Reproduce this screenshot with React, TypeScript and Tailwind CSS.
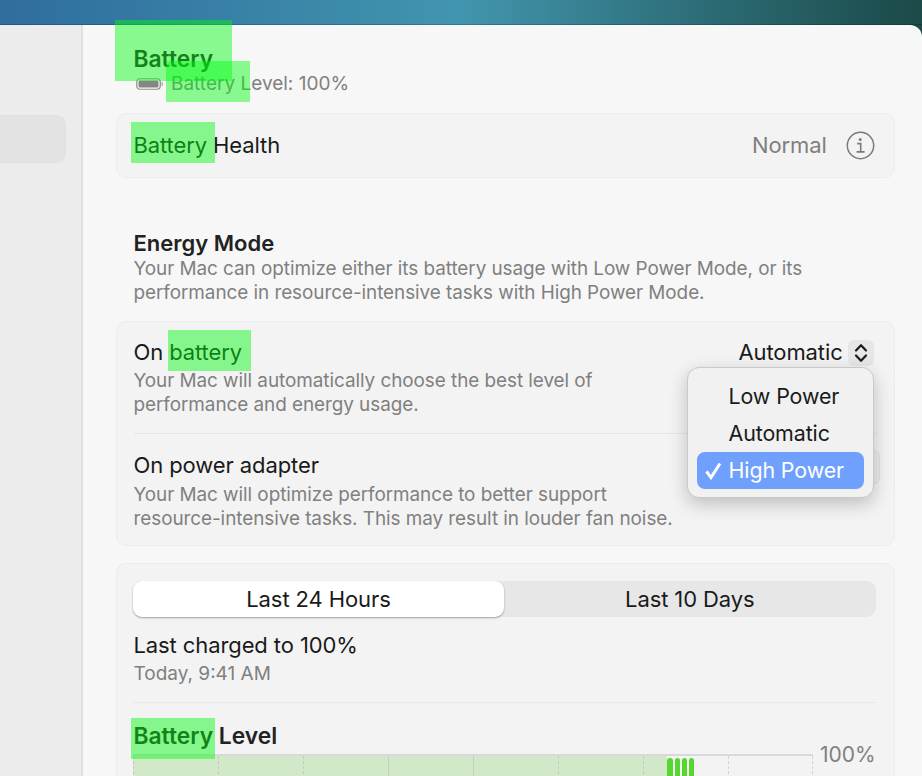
const highlights = [
  'left-[115px] top-[20px] w-[117px] h-[61px]',
  'left-[166px] top-[61px] w-[84px] h-[41px]',
  'left-[131px] top-[122px] w-[84px] h-[41px]',
  'left-[168px] top-[330px] w-[83px] h-[41px]',
  'left-[131px] top-[718px] w-[84px] h-[41px]',
]

const gridLines = [
  { x: 'border-dashed border-[#c5c9c3]' },
  { x: 'border-dashed border-[#c5c9c3]' },
  { x: 'border-dashed border-[#c5c9c3]' },
  { x: 'border-solid border-[#c2d0bd]' },
  { x: 'border-solid border-[#c2d0bd]' },
  { x: 'border-dashed border-[#c5c9c3]' },
  { x: 'border-dashed border-[#c5c9c3]' },
  { x: 'border-dashed border-[#d8d0d0]' },
]

function BatteryIcon() {
  return (
    <svg width="28" height="14" viewBox="0 0 28 14" className="shrink-0">
      <rect x="0.75" y="1.75" width="23.5" height="10.5" rx="3" fill="none" stroke="#8f8f8f" strokeWidth="1.2" />
      <rect x="2.5" y="3.5" width="20" height="7" rx="1.5" fill="#858585" />
      <rect x="25.5" y="5.2" width="1.3" height="3.6" rx="0.6" fill="#9a9a9a" />
    </svg>
  )
}

function InfoIcon() {
  return (
    <svg width="29" height="29" viewBox="0 0 29 29" fill="none" stroke="#7a7a7a" className="shrink-0">
      <circle cx="14.5" cy="14.5" r="13.2" strokeWidth="1.5" />
      <circle cx="14.2" cy="8.6" r="1.5" fill="#7a7a7a" stroke="none" />
      <path d="M11.2 12.6h3.5v8.2M10.6 20.9h8" strokeWidth="1.6" />
    </svg>
  )
}

function Stepper() {
  return (
    <div className="w-[26px] h-[26px] rounded-md bg-[#e6e6e6] flex items-center justify-center">
      <svg width="14" height="20" viewBox="0 0 14 20" fill="none" stroke="#1a1a1a" strokeWidth="2.2" strokeLinecap="round" strokeLinejoin="round">
        <path d="M2 7.5L7 2.2l5 5.3M2 12.5l5 5.3 5-5.3" />
      </svg>
    </div>
  )
}

export default function App() {
  return (
    <div className="relative w-[922px] h-[776px] overflow-hidden bg-[#1b4a48] font-['Inter','Liberation_Sans',sans-serif] text-[#1a1a1a]">
      {/* Wallpaper */}
      <div className="h-[25px] bg-gradient-to-r from-[#2f6d9e] via-[#4295ae] to-[#1b4a48] border-b border-black/20" />

      <div className="flex h-[751px] bg-[#f7f7f7] rounded-tr-xl overflow-hidden">
        {/* Sidebar */}
        <aside className="w-[83px] shrink-0 bg-[#ececec] border-r-2 border-[#e0e0e0] pt-[90px]">
          <div className="w-[66px] h-[48px] bg-[#e3e3e3] rounded-r-[10px] border border-l-0 border-[#e0e0e0]" />
        </aside>

        {/* Content */}
        <main className="flex-1 pl-[33px] pr-[28px]">
          <div className="pl-[17.5px] pt-[20px]">
            <h1 className="text-[22.8px] leading-[28px] font-semibold text-[#222]">Battery</h1>
            <div className="flex items-center gap-[7px] h-[24px] pl-[2.5px] -mt-[1px] text-[19px] text-[#808080]">
              <BatteryIcon />
              <span>Battery Level: 100%</span>
            </div>
          </div>

          <section className="mt-[17px] h-[65px] bg-[#f3f3f3] border border-[#ececec] rounded-[10px] pl-[16.5px] pr-[19px] flex items-center justify-between">
            <span className="text-[22px] tracking-[-0.1px]">Battery Health</span>
            <div className="flex items-center gap-[19px] text-[#7f7f7f]">
              <span className="text-[22px] tracking-[-0.1px]">Normal</span>
              <InfoIcon />
            </div>
          </section>

          <div className="pl-[17.5px] mt-[51px]">
            <h2 className="text-[22px] leading-[28px] font-semibold text-[#222]">Energy Mode</h2>
            <p className="text-[18.9px] leading-[24px] text-[#808080] tracking-[-0.05px]">
              Your Mac can optimize either its battery usage with Low Power Mode, or its
              <br />
              performance in resource-intensive tasks with High Power Mode.
            </p>
          </div>

          <section className="mt-[16px] h-[225px] bg-[#f3f3f3] border border-[#ececec] rounded-[10px] pl-[16.5px] pr-[17px]">
            <div className="h-[112px] pt-[16px] border-b border-[#e6e6e6] relative">
              <div className="text-[22px] leading-[28px] tracking-[-0.1px]">On battery</div>
              <p className="text-[18.9px] leading-[24px] text-[#808080] tracking-[-0.05px] mt-[3px]">
                Your Mac will automatically choose the best level of
                <br />
                performance and energy usage.
              </p>
              <div className="absolute right-[3px] top-[14px] flex items-center gap-[5px]">
                <span className="text-[22px] tracking-[-0.1px]">Automatic</span>
                <Stepper />
              </div>
            </div>
            <div className="pt-[17px] relative">
              <div className="text-[22px] leading-[28px] tracking-[-0.1px]">On power adapter</div>
              <p className="text-[18.9px] leading-[24px] text-[#808080] tracking-[-0.05px] mt-[4px]">
                Your Mac will optimize performance to better support
                <br />
                resource-intensive tasks. This may result in louder fan noise.
              </p>
              <div className="absolute -right-[3px] top-[16px] w-[26px] h-[34px] rounded-md bg-[#ececec] border border-[#e3e3e3]" />
            </div>
          </section>

          <section className="mt-[17px] h-[260px] bg-[#f3f3f3] border border-[#ececec] rounded-[10px] pl-[16px] pr-[18px] pt-[17px]">
            <div className="flex h-[36px] bg-[#e7e7e7] rounded-[9px]">
              <div className="w-[371px] bg-white rounded-[9px] shadow-[0_1px_2px_rgba(0,0,0,0.35)] flex items-center justify-center text-[22px] tracking-[-0.1px]">
                Last 24 Hours
              </div>
              <div className="flex-1 flex items-center justify-center text-[22px] tracking-[-0.1px]">Last 10 Days</div>
            </div>
            <div className="mt-[14px] pl-[0.5px] text-[22px] leading-[28px] tracking-[-0.1px]">Last charged to 100%</div>
            <div className="text-[19px] leading-[25px] pl-[0.5px] text-[#808080] mt-[2px]">Today, 9:41 AM</div>
            <div className="mt-[16px] border-t border-[#e8e8e8]" />
            <div className="mt-[19px] pl-[0.5px] text-[22.8px] leading-[28px] font-semibold text-[#222]">Battery Level</div>
            <div className="flex mt-[4px] items-start">
              <div className="relative w-[680px] h-[60px] border-t-2 border-[#d9d9d9] flex shrink-0">
                <div className="absolute left-0 top-0 bottom-0 w-[534px] bg-[#d2e9c9]" />
                {gridLines.map((line, i) => (
                  <div key={i} className={`relative w-[85px] h-full border-l ${line.x}`} />
                ))}
                <div className="absolute right-0 top-0 bottom-0 border-r border-dashed border-[#d8d0d0]" />
                <div className="absolute left-[534px] top-[2px] flex gap-[2px]">
                  <div className="w-[6px] h-[60px] rounded-t-[3px] bg-[#56d62f]" />
                  <div className="w-[5px] h-[60px] rounded-t-[3px] bg-[#56d62f]" />
                  <div className="w-[5px] h-[60px] rounded-t-[3px] bg-[#56d62f]" />
                  <div className="w-[5px] h-[60px] rounded-t-[3px] bg-[#56d62f]" />
                </div>
              </div>
              <span className="ml-[7px] -mt-[11px] text-[21px] leading-[24px] text-[#808080]">100%</span>
            </div>
          </section>
        </main>
      </div>

      {/* Open menu */}
      <div className="absolute left-[687px] top-[367px] w-[187px] h-[131px] rounded-[12px] bg-[#f1f1f1] border border-[#c9c9c9] shadow-[0_6px_18px_rgba(0,0,0,0.22)] px-[9px] pt-[10px] text-[21.4px] tracking-[-0.1px]">
        <div className="h-[37px] pl-[31.5px] flex items-center">Low Power</div>
        <div className="h-[37px] pl-[31.5px] flex items-center">Automatic</div>
        <div className="h-[37px] pl-[7px] flex items-center gap-[5.5px] rounded-[8px] bg-[#70a0fd] text-white">
          <svg width="19" height="19" viewBox="0 0 19 19" fill="none" stroke="white" strokeWidth="3" className="shrink-0">
            <path d="M2.5 10.5l4.5 6L16 2.5" />
          </svg>
          <span>High Power</span>
        </div>
      </div>

      {/* Search highlights */}
      {highlights.map((h) => (
        <div key={h} className={`absolute bg-[#00fb0f]/45 ${h}`} />
      ))}
    </div>
  )
}
